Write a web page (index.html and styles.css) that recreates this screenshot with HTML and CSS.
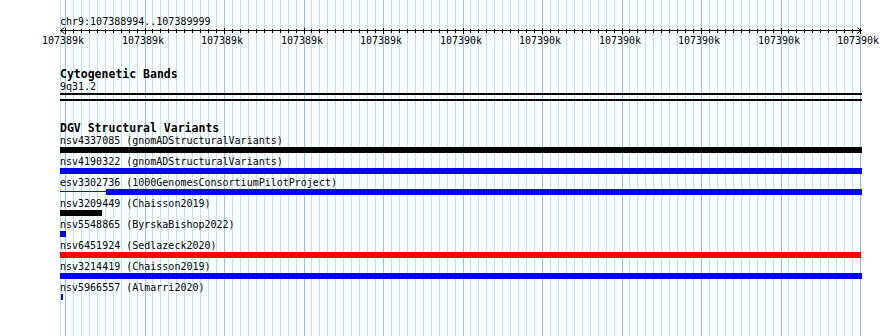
FILE: index.html
```html
<!DOCTYPE html>
<html lang="en">
<head>
  <meta charset="UTF-8">
  <meta name="viewport" content="width=device-width, initial-scale=1.0">
  <title>chr9:107388994..107389999</title>
  <link rel="stylesheet" href="styles.css">
</head>
<body>
  <div class="browser">
    <!-- Grid lines (drawn by script.js) -->
    <svg class="grid" id="grid" width="890" height="336"></svg>

    <div class="tracks">
      <!-- Ruler -->
      <div class="ruler">
        <div class="locus">chr9:107388994..107389999</div>
        <svg class="scale" id="scale" width="890" height="21">
          <rect class="tick" x="60" y="3" width="802" height="1"></rect>
          <path class="arrow" d="M64.5 0.5 L60.5 3.5 L64.5 6.5"></path>
          <path class="arrow" d="M857 0.5 L861 3.5 L857 6.5"></path>
        </svg>
      </div>

      <!-- Cytogenetic Bands -->
      <section class="track">
        <h2 class="track-title">Cytogenetic Bands</h2>
        <div class="feature-label">9q31.2</div>
        <div class="band"></div>
      </section>

      <!-- DGV Structural Variants -->
      <section class="track">
        <h2 class="track-title">DGV Structural Variants</h2>

        <div class="feature">
          <div class="feature-label">nsv4337085 (gnomADStructuralVariants)</div>
          <div class="bar black" style="width: 802px"></div>
        </div>

        <div class="feature">
          <div class="feature-label">nsv4190322 (gnomADStructuralVariants)</div>
          <div class="bar blue" style="width: 802px"></div>
        </div>

        <div class="feature">
          <div class="feature-label">esv3302736 (1000GenomesConsortiumPilotProject)</div>
          <div class="bar-split">
            <div class="stem blue" style="width: 46px"></div>
            <div class="bar blue" style="width: 756px"></div>
          </div>
        </div>

        <div class="feature">
          <div class="feature-label">nsv3209449 (Chaisson2019)</div>
          <div class="bar black" style="width: 42px"></div>
        </div>

        <div class="feature">
          <div class="feature-label">nsv5548865 (ByrskaBishop2022)</div>
          <div class="bar blue" style="width: 6px"></div>
        </div>

        <div class="feature">
          <div class="feature-label">nsv6451924 (Sedlazeck2020)</div>
          <div class="bar red" style="width: 801px"></div>
        </div>

        <div class="feature">
          <div class="feature-label">nsv3214419 (Chaisson2019)</div>
          <div class="bar blue" style="width: 802px"></div>
        </div>

        <div class="feature">
          <div class="feature-label">nsv5966557 (Almarri2020)</div>
          <div class="bar blue" style="width: 2px; margin-left: 1px"></div>
        </div>
      </section>
    </div>
  </div>

  <script src="script.js"></script>
</body>
</html>
```

FILE: styles.css
```css
/* Page */
body {
    margin: 0;
    background-color: #ffffff;
    color: #000000;
    font-family: "DejaVu Sans Mono", "Liberation Mono", monospace;
    font-size: 10px;
}

.browser {
    position: relative;
    width: 890px;
    height: 336px;
    overflow: hidden;
}

/* Grid sits behind the tracks */
.grid {
    position: absolute;
    top: 0;
    left: 0;
}

.grid .minor {
    fill: #aeeaf0;
}

.grid .major {
    fill: #88c8e6;
}

.tracks {
    position: relative;
    width: 802px;
    padding: 16px 0 0 60px;
}

/* Ruler */
.locus {
    height: 11px;
    line-height: 11px;
    white-space: nowrap;
}

.scale {
    display: block;
    margin-left: -60px;
    overflow: visible;
}

.scale .tick {
    fill: #000000;
}

.scale .arrow {
    fill: none;
    stroke: #000000;
    stroke-width: 1;
}

.scale text {
    font-family: "DejaVu Sans Mono", "Liberation Mono", monospace;
    font-size: 10px;
    fill: #000000;
}

/* Tracks */
.track {
    margin-top: 20px;
}

.track + .track {
    margin-top: 21px;
}

.track-title {
    margin: 0 0 1px;
    height: 12px;
    font-size: 11.5px;
    font-weight: bold;
    line-height: 12px;
    white-space: nowrap;
}

.feature-label {
    height: 11px;
    line-height: 11px;
    white-space: nowrap;
}

.band {
    margin-top: 1px;
    height: 4px;
    border-top: 2px solid #000000;
    border-bottom: 2px solid #000000;
}

.feature {
    height: 21px;
}

.bar {
    height: 6px;
    margin-top: 1px;
}

.bar-split {
    display: flex;
    align-items: flex-start;
}

.stem {
    height: 1px;
    margin-top: 3px;
}

.black {
    background-color: #000000;
}

.blue {
    background-color: #0000ff;
}

.red {
    background-color: #ff0000;
}
```

FILE: script.js
```js
// Ruler ticks, labels and grid lines for chr9:107388994..107389999
const svgNS = 'http://www.w3.org/2000/svg';
const grid = document.getElementById('grid');
const scale = document.getElementById('scale');

const firstTick = 107389000; // first multiple of 10 in view
const tickBp = 10;
const tickPx = 7.95;

function tickX(i) {
  return Math.round(65 + i * tickPx);
}

function addRect(parent, x, y, w, h, cls) {
  const r = document.createElementNS(svgNS, 'rect');
  r.setAttribute('x', x);
  r.setAttribute('y', y);
  r.setAttribute('width', w);
  r.setAttribute('height', h);
  r.setAttribute('class', cls);
  parent.appendChild(r);
}

// left edge of the view
addRect(grid, 60, 0, 1, 336, 'minor');

for (let i = 0; i <= 100; i++) {
  const x = tickX(i);
  const major = i % 10 === 0;

  addRect(grid, x, 0, 1, 336, major ? 'major' : 'minor');

  if (major) {
    addRect(scale, x, 1, 1, 6, 'tick');

    const label = document.createElementNS(svgNS, 'text');
    label.setAttribute('x', x - 2);
    label.setAttribute('y', 17);
    label.setAttribute('text-anchor', 'middle');
    label.textContent = Math.round((firstTick + i * tickBp) / 1000) + 'k';
    scale.appendChild(label);
  } else {
    addRect(scale, x, 2, 1, 4, 'tick');
  }
}
```
